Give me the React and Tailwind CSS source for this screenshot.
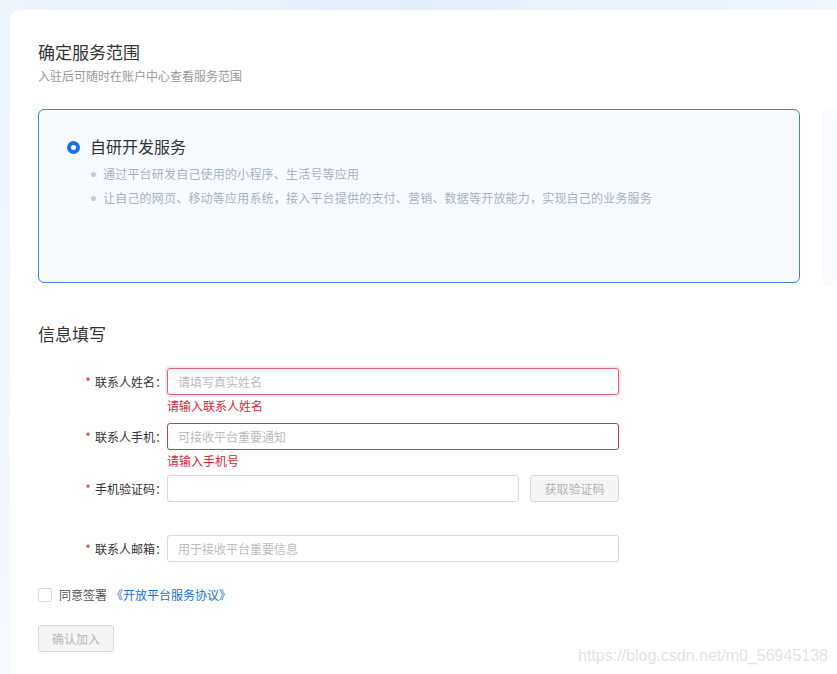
import React from "react";

function Row({ label, children, error, mb }) {
  return (
    <div className={`flex items-start ${mb}`}>
      <div className="w-[129px] shrink-0 text-right text-[12px] leading-[27px] text-[#333]">
        <span className="text-[#d9303e] mr-[4px]">*</span>
        {label}：
      </div>
      <div className="flex flex-col">
        {children}
        {error && (
          <div className="mt-[2px] text-[12px] leading-[18px] text-[#d2283c]">{error}</div>
        )}
      </div>
    </div>
  );
}

export default function App() {
  return (
    <div
      className="relative min-h-screen overflow-hidden bg-gradient-to-b from-[#edf5fd] to-[#f6f9fd] pl-[10px] pt-[10px]"
      style={{ fontFamily: '"Noto Sans CJK SC", "Noto Sans", sans-serif' }}
    >
      <div className="absolute left-0 top-0 h-[10px] w-full bg-gradient-to-r from-[#eef5fc] via-[#e2f0fc] to-[#f0f7fd]" />
      <div className="relative min-h-[664px] rounded-tl-[10px] bg-white pl-[28px] pt-[30px]">
        <div className="text-[17px] leading-[24px] text-[#333]">确定服务范围</div>
        <div className="mt-[3px] text-[12px] leading-[18px] text-[#999]">入驻后可随时在账户中心查看服务范围</div>

        <div className="mt-[24px] flex gap-[22px]">
          <div className="h-[174px] w-[762px] shrink-0 rounded-[6px] border border-[#3f80da] bg-[#f7fbff] pl-[28px] pt-[27px]">
            <div className="flex h-[20px] items-center gap-[10px]">
              <span className="h-[13px] w-[13px] rounded-full border-[4px] border-[#1a72ea] bg-white" />
              <span className="-mt-[2px] text-[16px] leading-[20px] text-[#333]">自研开发服务</span>
            </div>
            <div className="mt-[5px] pl-[24px]">
              {[
                "通过平台研发自己使用的小程序、生活号等应用",
                "让自己的网页、移动等应用系统，接入平台提供的支付、营销、数据等开放能力，实现自己的业务服务",
              ].map((t) => (
                <div key={t} className="flex h-[24px] items-center gap-[7px] text-[12px] tracking-[0.2px] text-[#a6b2c4]">
                  <span className="h-[5px] w-[5px] rounded-full bg-[#c3cad6]" />
                  <span>{t}</span>
                </div>
              ))}
            </div>
          </div>
          <div className="h-[176px] flex-1 rounded-[6px] border border-[#f6f8fb] bg-[#fbfcff]" />
        </div>

        <div className="mt-[37px] text-[17px] leading-[24px] text-[#333]">信息填写</div>

        <div className="mt-[22px]">
          <Row label="联系人姓名" error="请输入联系人姓名" mb="mb-[8px]">
            <input
              className="h-[27px] w-[452px] rounded-[3px] border border-[#e0647a] px-[10px] text-[12px] text-[#333] shadow-[0_0_0_2px_rgba(240,110,130,0.18)] outline-none placeholder:text-[#bbb]"
              placeholder="请填写真实姓名"
            />
          </Row>
          <Row label="联系人手机" error="请输入手机号" mb="mb-[5px]">
            <input
              className="h-[27px] w-[452px] rounded-[3px] border border-[#d2384d] px-[10px] text-[12px] text-[#333] outline-none placeholder:text-[#bbb]"
              placeholder="可接收平台重要通知"
            />
          </Row>
          <Row label="手机验证码" mb="mb-[33px]">
            <div className="flex gap-[11px]">
              <input className="h-[27px] w-[352px] rounded-[3px] border border-[#d9d9d9] px-[10px] text-[12px] outline-none" />
              <button className="h-[27px] w-[89px] rounded-[3px] border border-[#d9d9d9] bg-[#f5f5f5] text-[12px] text-[#b3b3b3]">
                获取验证码
              </button>
            </div>
          </Row>
          <Row label="联系人邮箱" mb="">
            <input
              className="h-[27px] w-[452px] rounded-[3px] border border-[#d9d9d9] px-[10px] text-[12px] text-[#333] outline-none placeholder:text-[#bbb]"
              placeholder="用于接收平台重要信息"
            />
          </Row>
        </div>

        <div className="mt-[26px] flex h-[14px] items-center text-[12px]">
          <span className="h-[14px] w-[14px] rounded-[2px] border border-[#d9d9d9] bg-white" />
          <span className="ml-[7px] text-[#555]">同意签署</span>
          <span className="ml-[4px] text-[#1a6fd0]">《开放平台服务协议》</span>
        </div>

        <button className="mt-[23px] h-[27px] w-[76px] rounded-[3px] border border-[#d9d9d9] bg-[#f5f5f5] text-[12px] text-[#b8b8b8]">
          确认加入
        </button>
      </div>

      <div
        className="absolute bottom-[8px] right-[9px] text-[16px] leading-[20px] text-[#e3e3e3]"
        style={{ fontFamily: '"Liberation Sans", Arial, sans-serif' }}
      >
        https://blog.csdn.net/m0_56945138
      </div>
    </div>
  );
}
